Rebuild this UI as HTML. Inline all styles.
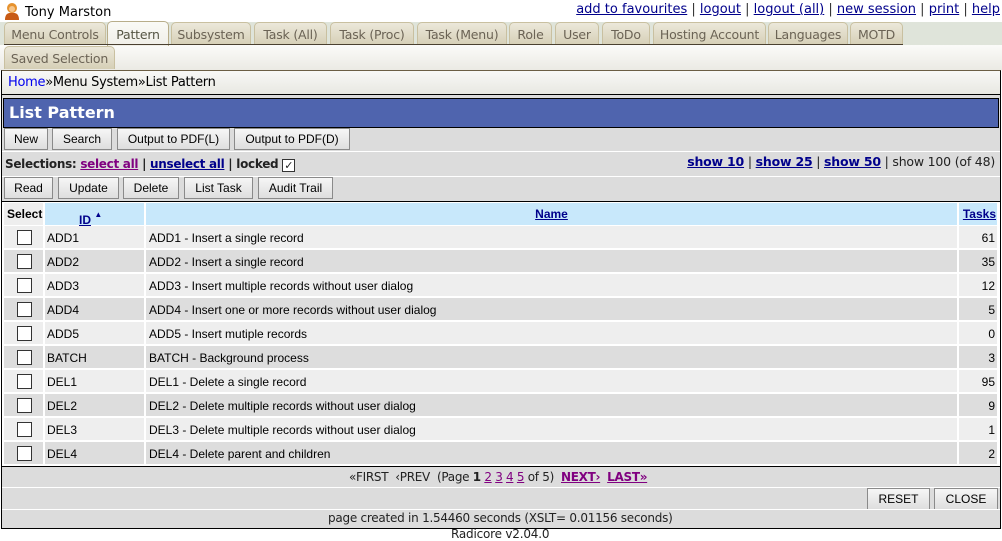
<!DOCTYPE html>
<html><head><style>
*{margin:0;padding:0;box-sizing:border-box}
body{width:1002px;height:541px;background:#fff;font-family:"DejaVu Sans","Liberation Sans",sans-serif;font-size:12px;color:#000;position:relative;overflow:hidden}
.a{position:absolute}
a{color:#00008b;text-decoration:underline}
.tab{position:absolute;height:23px;border:1px solid #c9c0a0;border-bottom:none;border-radius:5px 5px 0 0;background:linear-gradient(#ece8da,#d6cfb6);color:#6b6355;font-size:12.5px;line-height:23px;text-align:center;letter-spacing:-0.2px}
.btn{position:absolute;height:22px;border:1px solid #8a8a8a;background:linear-gradient(#f6f6f6,#dedede);font-family:"Liberation Sans",sans-serif;font-size:12px;line-height:20px;text-align:center}
.c{position:absolute;font-family:"Liberation Sans",sans-serif;font-size:12px;line-height:24px;height:22px}
.cb{position:absolute;width:15px;height:15px;border:1px solid #333;background:#fff}
</style></head><body>
<div class="a" style="left:4px;top:2px;width:16px;height:18px">
<svg width="16" height="18"><circle cx="8" cy="6" r="5" fill="#e6922e"/><path d="M1 18 Q1 10 8 11 Q15 10 15 18Z" fill="#c85a14"/><circle cx="8" cy="7" r="3" fill="#f6c58a"/></svg></div>
<div class="a" style="left:25px;top:5px;font-size:13px">Tony Marston</div>
<div class="a" style="right:2px;top:2px;font-size:13px;color:#333"><a href="#">add to favourites</a> | <a href="#">logout</a> | <a href="#">logout (all)</a> | <a href="#">new session</a> | <a href="#">print</a> | <a href="#">help</a></div>
<div class="a" style="left:0;top:22px;width:1002px;height:23px;background:#dfe4da"></div>
<div class="a" style="left:0;top:45px;width:1002px;height:25px;background:linear-gradient(#fbfbf9,#ebeae4)"></div>
<div class="tab" style="left:4px;top:22px;width:102px">Menu Controls</div>
<div class="tab" style="left:107px;top:21px;width:62px;height:25px;background:linear-gradient(#fafaf6,#f0efe8);color:#554;border-color:#b8ad8a;line-height:25px">Pattern</div>
<div class="tab" style="left:171px;top:22px;width:80px">Subsystem</div>
<div class="tab" style="left:254px;top:22px;width:73px">Task (All)</div>
<div class="tab" style="left:330px;top:22px;width:84px">Task (Proc)</div>
<div class="tab" style="left:417px;top:22px;width:90px">Task (Menu)</div>
<div class="tab" style="left:509px;top:22px;width:43px">Role</div>
<div class="tab" style="left:555px;top:22px;width:44px">User</div>
<div class="tab" style="left:602px;top:22px;width:48px">ToDo</div>
<div class="tab" style="left:653px;top:22px;width:113px">Hosting Account</div>
<div class="tab" style="left:768px;top:22px;width:80px">Languages</div>
<div class="tab" style="left:850px;top:22px;width:53px">MOTD</div>
<div class="a" style="left:4px;top:44px;width:899px;border-top:1px solid #4a4030"></div>
<div class="tab" style="left:4px;top:46px;width:111px">Saved Selection</div>
<div class="a" style="left:1px;top:70px;width:1000px;height:459px;border:1px solid #000;border-top:1px solid #6b5e44;background:#dcdcdc"></div>
<div class="a" style="left:2px;top:71px;width:998px;height:24px;background:linear-gradient(#f8f8f6,#e8e8e2);border-bottom:1px solid #000;padding:4px 0 0 6px;font-size:13px;letter-spacing:-0.3px"><a href="#" style="color:#00e;text-decoration:none">Home</a>»Menu System»List Pattern</div>
<div class="a" style="left:3px;top:98px;width:996px;height:30px;background:#4f64ae;border:1px solid #000;color:#fff;font-weight:bold;font-size:16px;line-height:28px;padding-left:5px">List Pattern</div>
<div class="btn" style="left:4px;top:128px;width:44px">New</div>
<div class="btn" style="left:52px;top:128px;width:60px">Search</div>
<div class="btn" style="left:117px;top:128px;width:113px">Output to PDF(L)</div>
<div class="btn" style="left:234px;top:128px;width:116px">Output to PDF(D)</div>
<div class="a" style="left:2px;top:151px;width:998px;border-top:1px solid #fff"></div>
<div class="a" style="left:5px;top:157px;font-size:12px;font-weight:bold;color:#222;letter-spacing:-0.3px">Selections: <a href="#" style="color:#800080">select all</a> | <a href="#">unselect all</a> | locked <span style="display:inline-block;width:13px;height:13px;border:1px solid #333;background:#fff;font-size:11px;line-height:11px;vertical-align:-1px;text-align:center">✓</span></div>
<div class="a" style="right:7px;top:154px;font-size:12.5px;color:#222;letter-spacing:-0.2px"><b><a href="#">show 10</a></b> | <b><a href="#">show 25</a></b> | <b><a href="#">show 50</a></b> | show 100 (of 48)</div>
<div class="a" style="left:2px;top:176px;width:998px;border-top:1px solid #fff"></div>
<div class="btn" style="left:4px;top:177px;width:49px">Read</div>
<div class="btn" style="left:58px;top:177px;width:61px">Update</div>
<div class="btn" style="left:123px;top:177px;width:56px">Delete</div>
<div class="btn" style="left:184px;top:177px;width:69px">List Task</div>
<div class="btn" style="left:258px;top:177px;width:75px">Audit Trail</div>
<div class="a" style="left:2px;top:201px;width:998px;height:266px;background:#fff;border-top:1px solid #000;border-bottom:1px solid #000"></div>
<div class="c" style="left:4px;top:203px;width:39px;font-weight:bold;background:#eee;padding-left:3px;line-height:22px">Select</div>
<div class="c" style="left:45px;top:203px;width:99px;background:#c8e8fb;font-weight:bold;padding-left:34px;line-height:24px"><a href="#">ID</a> <span style="font-size:8px;vertical-align:7px;color:#00008b">▲</span></div>
<div class="c" style="left:146px;top:203px;width:811px;background:#c8e8fb;font-weight:bold;text-align:center;line-height:22px"><a href="#">Name</a></div>
<div class="c" style="left:959px;top:203px;width:38px;background:#c8e8fb;font-weight:bold;text-align:right;padding-right:1px;line-height:22px"><a href="#">Tasks</a></div>
<div id="rows"></div>
<script>
var d=[["ADD1","ADD1 - Insert a single record",61],["ADD2","ADD2 - Insert a single record",35],["ADD3","ADD3 - Insert multiple records without user dialog",12],["ADD4","ADD4 - Insert one or more records without user dialog",5],["ADD5","ADD5 - Insert mutiple records",0],["BATCH","BATCH - Background process",3],["DEL1","DEL1 - Delete a single record",95],["DEL2","DEL2 - Delete multiple records without user dialog",9],["DEL3","DEL3 - Delete multiple records without user dialog",1],["DEL4","DEL4 - Delete parent and children",2]];
var h="";d.forEach(function(r,i){var y=226+i*24,bg=i%2?"#ddd":"#eee";
h+='<div class="c" style="left:4px;top:'+y+'px;width:39px;background:'+bg+'"><div class="cb" style="left:13px;top:4px"></div></div>'+
'<div class="c" style="left:45px;top:'+y+'px;width:99px;background:'+bg+';padding-left:2px">'+r[0]+'</div>'+
'<div class="c" style="left:146px;top:'+y+'px;width:811px;background:'+bg+';padding-left:3px">'+r[1]+'</div>'+
'<div class="c" style="left:959px;top:'+y+'px;width:38px;background:'+bg+';text-align:right;padding-right:2px">'+r[2]+'</div>';});
document.getElementById("rows").innerHTML=h;
</script>
<div class="a" style="left:349px;top:470px;font-size:12px;color:#222;letter-spacing:-0.3px">«FIRST &nbsp;‹PREV &nbsp;(Page <b>1</b> <a href="#" style="color:#800080">2</a> <a href="#" style="color:#800080">3</a> <a href="#" style="color:#800080">4</a> <a href="#" style="color:#800080">5</a> of 5) &nbsp;<b><a href="#" style="color:#800080">NEXT›</a></b> &nbsp;<b><a href="#" style="color:#800080">LAST»</a></b></div>
<div class="a" style="left:2px;top:487px;width:998px;border-top:1px solid #fff"></div>
<div class="btn" style="left:867px;top:488px;width:63px">RESET</div>
<div class="btn" style="left:934px;top:488px;width:64px">CLOSE</div>
<div class="a" style="left:2px;top:509px;width:998px;border-top:1px solid #fff"></div>
<div class="a" style="left:328px;top:511px;font-size:12px;color:#222;letter-spacing:-0.25px">page created in 1.54460 seconds (XSLT= 0.01156 seconds)</div>
<div class="a" style="left:451px;top:527px;font-size:12px;color:#222;letter-spacing:-0.2px">Radicore v2.04.0</div>
</body></html>
